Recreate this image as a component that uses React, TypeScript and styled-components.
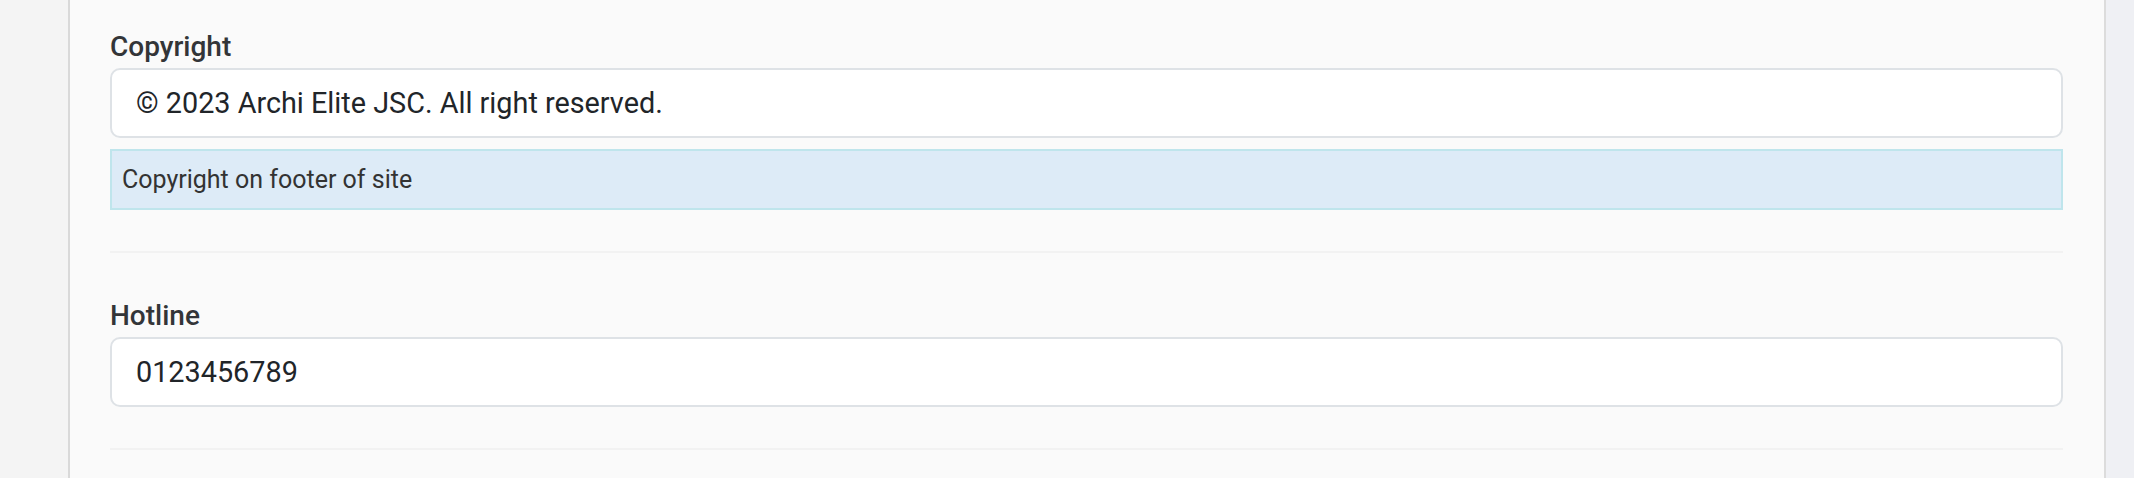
import React from "react";
import styled, { createGlobalStyle } from "styled-components";

const GlobalStyle = createGlobalStyle`
  html, body {
    margin: 0;
    padding: 0;
    height: 100%;
    overflow: hidden;
    background: #f4f4f5;
    font-family: Roboto, "Liberation Sans", Arial, sans-serif;
  }
  #root { height: 100%; }
`;

const Page = styled.div`
  display: grid;
  grid-template-columns: 68px 1fr 28px;
  height: 478px;
  overflow: hidden;
`;

const LeftGutter = styled.div`
  background: #f4f4f4;
`;

const RightGutter = styled.div`
  background: #eff0f4;
`;

const Panel = styled.main`
  background: #fafafa;
  border-left: 2px solid #d9d9d9;
  border-right: 2px solid #dcdcdc;
  padding: 0 41px 0 40px;
  overflow: hidden;
`;

const FormList = styled.div`
  display: flex;
  flex-direction: column;
  margin-top: -16px;
`;

const FormGroup = styled.section`
  display: flex;
  flex-direction: column;
  padding: 48px 0 41px;
  border-bottom: 2px solid #f2f2f2;
`;

const Label = styled.label`
  font-size: 28px;
  line-height: 30px;
  font-weight: 500;
  color: #333538;
  margin-bottom: 6px;
`;

const Input = styled.input`
  box-sizing: border-box;
  width: 100%;
  height: 70px;
  border: 2px solid #dee2e6;
  border-radius: 10px;
  background: #ffffff;
  padding: 0 24px;
  font-family: Roboto, "Liberation Sans", Arial, sans-serif;
  font-size: 28.8px;
  color: #212529;
  outline: none;
`;

const HelpBox = styled.div`
  box-sizing: border-box;
  margin-top: 11px;
  height: 61px;
  display: flex;
  align-items: center;
  padding: 0 10px;
  background: #ddebf7;
  border: 2px solid #bfe5ec;
  font-size: 25px;
  color: #333333;
`;

export default function App() {
  return (
    <>
      <GlobalStyle />
      <Page>
        <LeftGutter />
        <Panel>
          <FormList>
            <FormGroup>
              <Label htmlFor="copyright">Copyright</Label>
              <Input
                id="copyright"
                defaultValue="© 2023 Archi Elite JSC. All right reserved."
              />
              <HelpBox>Copyright on footer of site</HelpBox>
            </FormGroup>
            <FormGroup>
              <Label htmlFor="hotline">Hotline</Label>
              <Input id="hotline" defaultValue="0123456789" />
            </FormGroup>
          </FormList>
        </Panel>
        <RightGutter />
      </Page>
    </>
  );
}
